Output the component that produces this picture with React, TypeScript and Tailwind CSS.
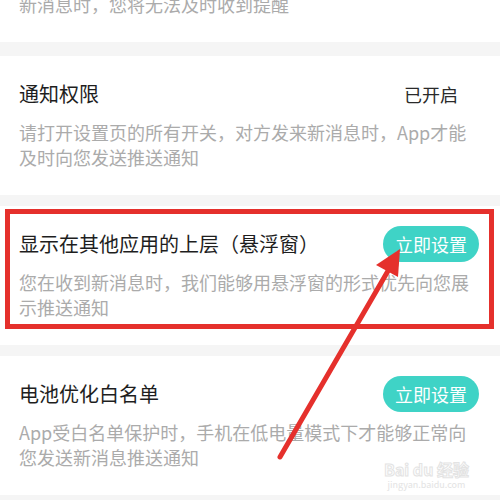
import React from "react";

interface Item {
  title: string;
  desc: string;
  status?: string;
  action?: string;
  highlight?: boolean;
}

const items: Item[] = [
  {
    title: "通知权限",
    desc: "请打开设置页的所有开关，对方发来新消息时，App才能及时向您发送推送通知",
    status: "已开启",
  },
  {
    title: "显示在其他应用的上层（悬浮窗）",
    desc: "您在收到新消息时，我们能够用悬浮窗的形式优先向您展示推送通知",
    action: "立即设置",
    highlight: true,
  },
  {
    title: "电池优化白名单",
    desc: "App受白名单保护时，手机在低电量模式下才能够正常向您发送新消息推送通知",
    action: "立即设置",
  },
];

const font = { fontFamily: '"Noto Sans CJK SC", "Noto Sans", sans-serif' };

const SettingCard: React.FC<{ item: Item }> = ({ item }) => (
  <div className="relative bg-white pl-[19px] py-[25px]">
    <div className="flex items-center justify-between h-[26px]">
      <span className="text-[20px] leading-[26px] text-[#1e1e1e]">{item.title}</span>
      {item.status && (
        <span className="text-[18px] leading-[26px] text-[#2a2a2a] mr-[42px]">
          {item.status}
        </span>
      )}
      {item.action && (
        <button className="w-[96px] h-[36px] mr-[21px] rounded-full bg-[#3fd3c6] text-white text-[18px] leading-[36px]">
          {item.action}
        </button>
      )}
    </div>
    <p className="mt-[13px] max-w-[455px] text-[18px] leading-[25px] text-[#ababab]">
      {item.desc}
    </p>
    {item.highlight && (
      <div className="absolute left-[5px] right-[6px] top-[3px] bottom-[16px] border-[5px] border-[#e5302c] pointer-events-none" />
    )}
  </div>
);

export default function App() {
  return (
    <div className="relative w-[500px] h-[500px] overflow-hidden bg-[#f5f5f5]" style={font}>
      <div className="flex flex-col">
        {/* tail of the previous card, cut by the top of the screen */}
        <div className="bg-white pl-[19px] pb-[25px] pt-[2px] h-[42px] flex items-end">
          <p className="text-[18px] leading-[25px] text-[#ababab] -mb-[8px] pb-[8px]">
            新消息时，您将无法及时收到提醒
          </p>
        </div>
        <div className="mt-[14px] flex flex-col gap-[11px]">
          {items.map((item) => (
            <SettingCard key={item.title} item={item} />
          ))}
        </div>
      </div>

      {/* watermark */}
      <div className="absolute left-[384px] top-[460px] flex flex-col items-center pointer-events-none">
        <span className="text-[16px] leading-[19px] font-bold text-transparent [-webkit-text-stroke:1px_#e3e3e3]">
          Bai du 经验
        </span>
        <span className="text-[9px] leading-[11px] text-[#e3e3e3]">jingyan.baidu.com</span>
      </div>

      {/* arrow */}
      <svg className="absolute inset-0 pointer-events-none" width="500" height="500">
        <line x1="280" y1="457" x2="392" y2="264" stroke="#e5302c" strokeWidth="5" strokeLinecap="round" />
        <polygon points="400,249 376,265 398,277" fill="#e5302c" />
      </svg>
    </div>
  );
}
